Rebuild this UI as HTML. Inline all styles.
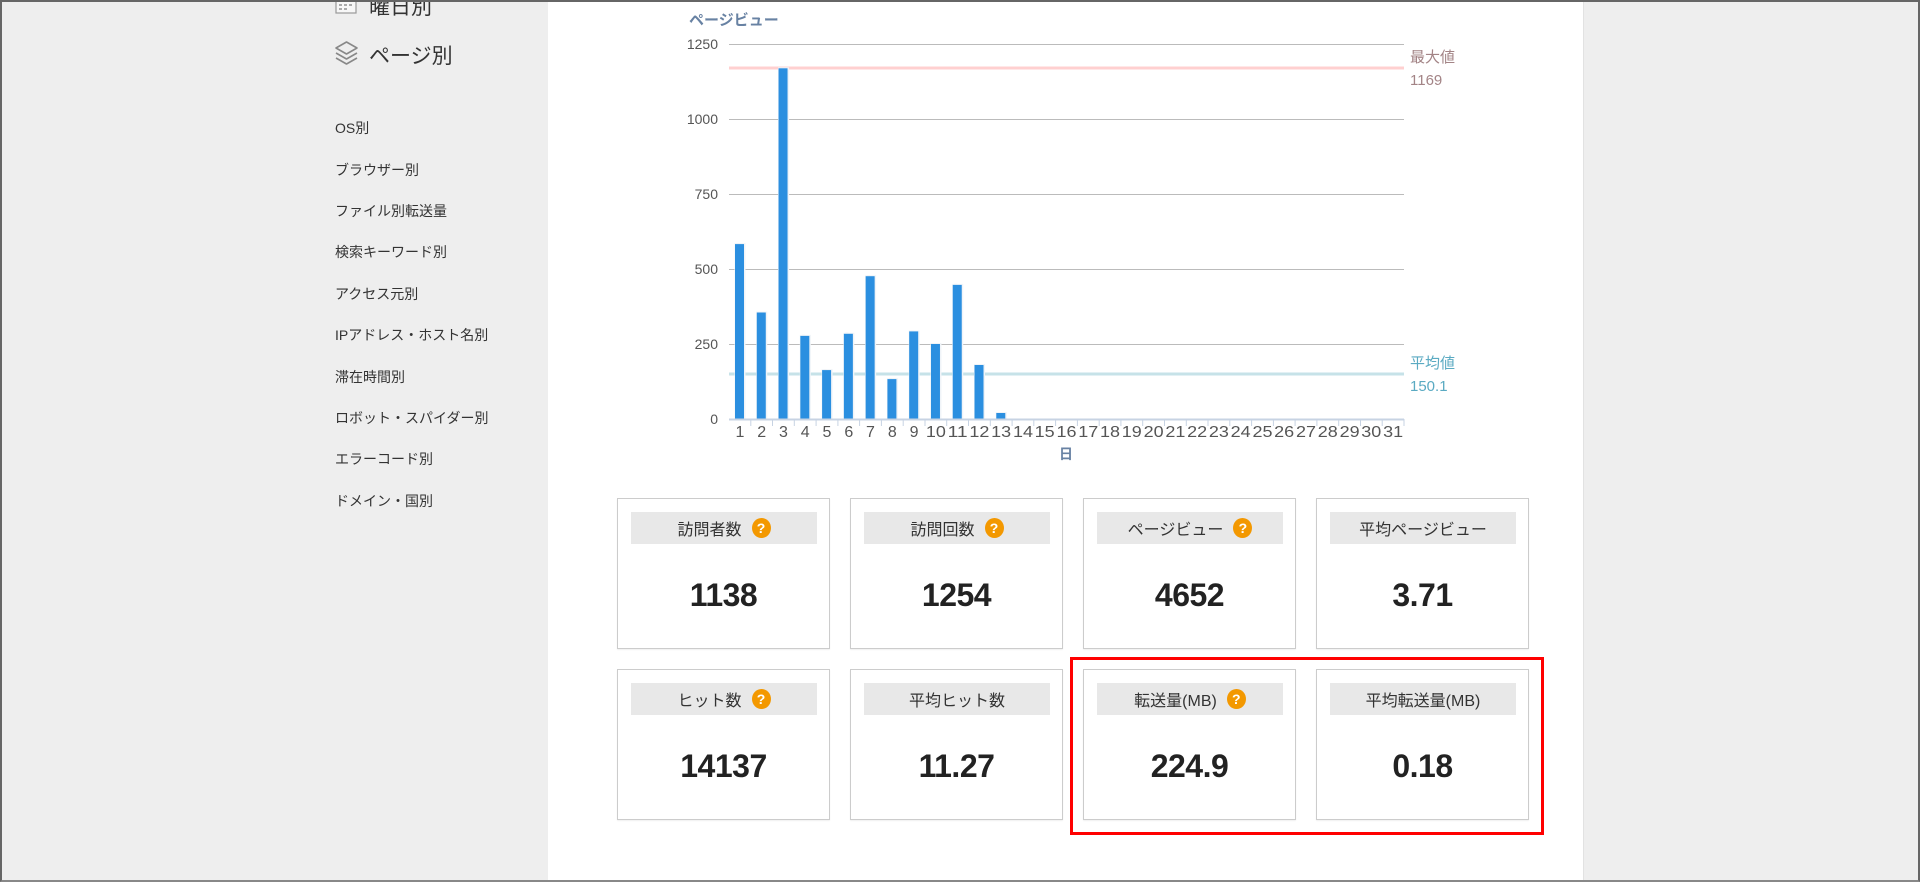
<!DOCTYPE html>
<html><head><meta charset="utf-8"><style>
*{margin:0;padding:0;box-sizing:border-box}
body{width:1920px;height:882px;overflow:hidden;background:#eeeeee;font-family:"Liberation Sans","Noto Sans CJK JP",sans-serif;position:relative}
.frame{position:absolute;left:0;top:0;width:1920px;height:882px;border:2px solid #666;border-bottom-color:#888;z-index:10;pointer-events:none}
.main{position:absolute;left:548px;top:0;width:1036px;height:882px;background:#fff;border-right:1px solid #e2e2e2}
.nav{position:absolute;left:335px;font-size:14px;color:#333;line-height:16px}
.big{position:absolute;left:369px;font-size:21px;color:#333}
.card{position:absolute;width:213px;height:151px;border:1px solid #ccc;background:#fff;box-shadow:0 1px 1px rgba(0,0,0,.06)}
.hd{position:absolute;left:13px;top:13px;width:186px;height:32px;background:#e8e8e8;font-size:16px;color:#333;display:flex;align-items:center;justify-content:center}
.q{display:inline-block;width:19px;height:20px;border-radius:50%;background:#f39800;color:#fff;font-size:14px;font-weight:bold;line-height:20px;text-align:center;margin-left:10px}
.num{position:absolute;left:0;width:100%;top:76px;text-align:center;font-size:32px;font-weight:bold;color:#222;line-height:40px;letter-spacing:-0.5px}
</style></head><body>
<div class="main"></div>

<svg style="position:absolute;left:335px;top:-6px" width="22" height="20" viewBox="0 0 22 20"><rect x="1" y="1" width="20" height="18" fill="#f7f7f7" stroke="#999" stroke-width="1.2"/><g fill="#aaa"><rect x="4" y="6" width="3" height="2"/><rect x="9" y="6" width="3" height="2"/><rect x="14" y="6" width="3" height="2"/><rect x="4" y="10" width="3" height="2"/><rect x="9" y="10" width="3" height="2"/><rect x="14" y="10" width="3" height="2"/><rect x="4" y="14" width="3" height="2"/><rect x="9" y="14" width="3" height="2"/></g></svg>
<div class="big" style="top:-9px">曜日別</div>
<svg style="position:absolute;left:334px;top:40px" width="25" height="26" viewBox="0 0 25 26" fill="none" stroke="#888" stroke-width="1.6" stroke-linejoin="round"><path d="M12.5 2 L23 8 L12.5 14 L2 8 Z"/><path d="M2 13 L12.5 19 L23 13"/><path d="M2 18 L12.5 24 L23 18"/></svg>
<div class="big" style="top:40px">ページ別</div>

<div class="nav" style="top:120px">OS別</div>
<div class="nav" style="top:162px">ブラウザー別</div>
<div class="nav" style="top:203px">ファイル別転送量</div>
<div class="nav" style="top:244px">検索キーワード別</div>
<div class="nav" style="top:286px">アクセス元別</div>
<div class="nav" style="top:327px">IPアドレス・ホスト名別</div>
<div class="nav" style="top:369px">滞在時間別</div>
<div class="nav" style="top:410px">ロボット・スパイダー別</div>
<div class="nav" style="top:451px">エラーコード別</div>
<div class="nav" style="top:493px">ドメイン・国別</div>

<svg style="position:absolute;left:0;top:0" width="1920" height="480" font-family="Liberation Sans, Noto Sans CJK JP, sans-serif">
<text x="689" y="25" font-size="15" font-weight="bold" fill="#6882a3">ページビュー</text>
<g stroke="#bbb" stroke-width="1">
<line x1="729" y1="44.5" x2="1404" y2="44.5"/><line x1="729" y1="119.5" x2="1404" y2="119.5"/><line x1="729" y1="194.5" x2="1404" y2="194.5"/><line x1="729" y1="269.5" x2="1404" y2="269.5"/><line x1="729" y1="344.5" x2="1404" y2="344.5"/>
</g>
<g font-size="14" fill="#555" text-anchor="end">
<text x="718" y="49">1250</text><text x="718" y="124">1000</text><text x="718" y="199">750</text><text x="718" y="274">500</text><text x="718" y="349">250</text><text x="718" y="424">0</text>
</g>
<line x1="729" y1="68" x2="1404" y2="68" stroke="#ffd0d0" stroke-width="3"/>
<line x1="729" y1="374" x2="1404" y2="374" stroke="#c6e2e8" stroke-width="3"/>
<g fill="#a38486" font-size="15"><text x="1410" y="62">最大値</text><text x="1410" y="85">1169</text></g>
<g fill="#5aaac2" font-size="15"><text x="1410" y="368">平均値</text><text x="1410" y="391">150.1</text></g>
<g id="bars"></g>
<line x1="729" y1="419.5" x2="1404" y2="419.5" stroke="#c7d3e3" stroke-width="2"/>
<g id="ticks" stroke="#c7d3e3" stroke-width="1"></g>
<g id="xl" font-size="16" fill="#555" text-anchor="middle"></g>
<text x="1066" y="459" font-size="14" font-weight="bold" fill="#6882a3" text-anchor="middle">日</text>
</svg>
<script>
var v=[583,355,1169,277,163,284,476,133,292,250,447,180,20];
var b='',t='',x='',s=675/31;
for(var i=0;i<31;i++){var x0=729+i*s;
 if(i<v.length){var h=v[i]*0.3;b+='<rect x="'+(x0+7.5)+'" y="'+(419-h-1)+'" width="3" height="'+(h+1)+'" fill="#ddd"/><rect x="'+(x0+5.5)+'" y="'+(419-h-1)+'" width="11" height="'+(h+1)+'" fill="#f0f4f8"/><rect x="'+(x0+6)+'" y="'+(419-h)+'" width="9" height="'+h+'" fill="#2b8fe0"/>';}
 t+='<line x1="'+(x0+s).toFixed(1)+'" y1="419" x2="'+(x0+s).toFixed(1)+'" y2="426"/>';
 x+='<text x="'+(x0+s/2).toFixed(1)+'" y="437"'+(i>=9?' textLength="20" lengthAdjust="spacingAndGlyphs"':'')+'>'+(i+1)+'</text>';}
document.getElementById('bars').innerHTML=b;document.getElementById('ticks').innerHTML=t;document.getElementById('xl').innerHTML=x;
</script>

<div class="card" style="left:617px;top:498px"><div class="hd">訪問者数<span class="q">?</span></div><div class="num">1138</div></div>
<div class="card" style="left:850px;top:498px"><div class="hd">訪問回数<span class="q">?</span></div><div class="num">1254</div></div>
<div class="card" style="left:1083px;top:498px"><div class="hd">ページビュー<span class="q">?</span></div><div class="num">4652</div></div>
<div class="card" style="left:1316px;top:498px"><div class="hd">平均ページビュー</div><div class="num">3.71</div></div>
<div class="card" style="left:617px;top:669px"><div class="hd">ヒット数<span class="q">?</span></div><div class="num">14137</div></div>
<div class="card" style="left:850px;top:669px"><div class="hd">平均ヒット数</div><div class="num">11.27</div></div>
<div class="card" style="left:1083px;top:669px"><div class="hd">転送量(MB)<span class="q">?</span></div><div class="num">224.9</div></div>
<div class="card" style="left:1316px;top:669px"><div class="hd">平均転送量(MB)</div><div class="num">0.18</div></div>
<div style="position:absolute;left:1070px;top:657px;width:474px;height:178px;border:3px solid #f00"></div>
<div class="frame"></div>
</body></html>
